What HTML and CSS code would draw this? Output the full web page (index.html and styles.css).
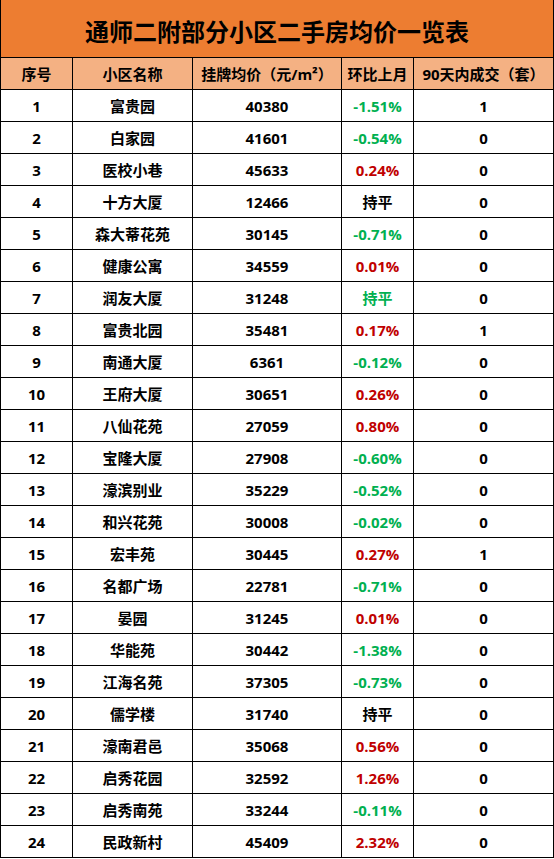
FILE: index.html
```html
<!DOCTYPE html>
<html lang="zh">
<head>
<meta charset="utf-8">
<link rel="stylesheet" href="styles.css">
</head>
<body>
<div class="sheet">
  <div class="title">通师二附部分小区二手房均价一览表</div>
  <div class="grid">
    <div class="h">序号</div><div class="h">小区名称</div><div class="h">挂牌均价（元/m²）</div><div class="h">环比上月</div><div class="h">90天内成交（套）</div>
    <div>1</div><div>富贵园</div><div>40380</div><div class="g">-1.51%</div><div>1</div>
    <div>2</div><div>白家园</div><div>41601</div><div class="g">-0.54%</div><div>0</div>
    <div>3</div><div>医校小巷</div><div>45633</div><div class="r">0.24%</div><div>0</div>
    <div>4</div><div>十方大厦</div><div>12466</div><div>持平</div><div>0</div>
    <div>5</div><div>森大蒂花苑</div><div>30145</div><div class="g">-0.71%</div><div>0</div>
    <div>6</div><div>健康公寓</div><div>34559</div><div class="r">0.01%</div><div>0</div>
    <div>7</div><div>润友大厦</div><div>31248</div><div class="g">持平</div><div>0</div>
    <div>8</div><div>富贵北园</div><div>35481</div><div class="r">0.17%</div><div>1</div>
    <div>9</div><div>南通大厦</div><div>6361</div><div class="g">-0.12%</div><div>0</div>
    <div>10</div><div>王府大厦</div><div>30651</div><div class="r">0.26%</div><div>0</div>
    <div>11</div><div>八仙花苑</div><div>27059</div><div class="r">0.80%</div><div>0</div>
    <div>12</div><div>宝隆大厦</div><div>27908</div><div class="g">-0.60%</div><div>0</div>
    <div>13</div><div>濠滨别业</div><div>35229</div><div class="g">-0.52%</div><div>0</div>
    <div>14</div><div>和兴花苑</div><div>30008</div><div class="g">-0.02%</div><div>0</div>
    <div>15</div><div>宏丰苑</div><div>30445</div><div class="r">0.27%</div><div>1</div>
    <div>16</div><div>名都广场</div><div>22781</div><div class="g">-0.71%</div><div>0</div>
    <div>17</div><div>晏园</div><div>31245</div><div class="r">0.01%</div><div>0</div>
    <div>18</div><div>华能苑</div><div>30442</div><div class="g">-1.38%</div><div>0</div>
    <div>19</div><div>江海名苑</div><div>37305</div><div class="g">-0.73%</div><div>0</div>
    <div>20</div><div>儒学楼</div><div>31740</div><div>持平</div><div>0</div>
    <div>21</div><div>濠南君邑</div><div>35068</div><div class="r">0.56%</div><div>0</div>
    <div>22</div><div>启秀花园</div><div>32592</div><div class="r">1.26%</div><div>0</div>
    <div>23</div><div>启秀南苑</div><div>33244</div><div class="g">-0.11%</div><div>0</div>
    <div>24</div><div>民政新村</div><div>45409</div><div class="r">2.32%</div><div>0</div>
  </div>
</div>
</body>
</html>
```
FILE: styles.css
```css
html, body {
  margin: 0;
  padding: 0;
  background: #ffffff;
}
.sheet {
  width: 554px;
  box-sizing: border-box;
  border-left: 1px solid #000;
  border-right: 1px solid #000;
  font-family: "Open Sans", "Noto Sans CJK SC", sans-serif;
  font-weight: 700;
  color: #000;
}
.title {
  height: 58px;
  border-bottom: 1px solid #000;
  background: #ED7D31;
  display: flex;
  align-items: center;
  justify-content: center;
  font-family: "Noto Sans CJK SC", sans-serif;
  font-size: 24px;
  font-weight: 700;
  padding-top: 3px;
  box-sizing: border-box;
}
.grid {
  display: grid;
  grid-template-columns: 72px 120px 149px 72px 139px;
  grid-auto-rows: 32px;
}
.grid > div {
  border-right: 1px solid #000;
  border-bottom: 1px solid #000;
  display: flex;
  align-items: center;
  justify-content: center;
  font-size: 15px;
  white-space: nowrap;
}
.grid > div:nth-child(5n) {
  border-right: none;
}
.grid > .h {
  background: #F4B183;
  font-size: 15px;
  font-weight: 700;
}
.g { color: #00B050; }
.r { color: #C00000; }
```
